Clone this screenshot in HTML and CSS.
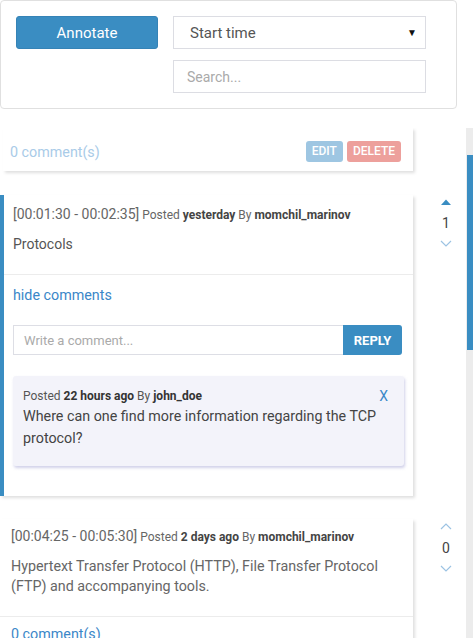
FILE: index.html
```html
<!DOCTYPE html>
<html>
<head>
<meta charset="utf-8">
<link rel="stylesheet" href="styles.css">
</head>
<body>
<div class="toolbar">
  <button class="btn-annotate">Annotate</button>
  <div class="filters">
    <div class="select"><span>Start time</span><span class="caret">&#9660;</span></div>
    <div class="input search">Search...</div>
  </div>
</div>

<div class="list-wrap">
  <div class="list">
    <div class="card card-partial">
      <span class="count faded">0 comment(s)</span>
      <div class="actions">
        <span class="btn-sm edit">EDIT</span>
        <span class="btn-sm del">DELETE</span>
      </div>
    </div>

    <div class="row">
      <div class="card active">
        <div class="card-body">
          <div class="meta"><span class="time">[00:01:30 - 00:02:35]</span> Posted <b>yesterday</b> By <b>momchil_marinov</b></div>
          <div class="text">Protocols</div>
        </div>
        <div class="card-foot">
          <div class="link">hide comments</div>
          <div class="reply-row">
            <div class="input comment-input">Write a comment...</div>
            <span class="btn-reply">REPLY</span>
          </div>
          <div class="comment">
            <div class="comment-meta"><span>Posted <b>22 hours ago</b> By <b>john_doe</b></span><span class="close">X</span></div>
            <div class="comment-text">Where can one find more information regarding the TCP protocol?</div>
          </div>
        </div>
      </div>
      <div class="vote">
        <svg class="up-filled" width="10" height="6" viewBox="0 0 10 6"><path d="M0 6 L5 0.5 L10 6 Z" fill="#3a8dc2"/></svg>
        <span class="num">1</span>
        <svg width="12" height="7" viewBox="0 0 12 7"><path d="M1 1 L6 6 L11 1" fill="none" stroke="#9cc3e3" stroke-width="1.2"/></svg>
      </div>
    </div>

    <div class="row">
      <div class="card plain">
        <div class="card-body">
          <div class="meta"><span class="time">[00:04:25 - 00:05:30]</span> Posted <b>2 days ago</b> By <b>momchil_marinov</b></div>
          <div class="text">Hypertext Transfer Protocol (HTTP), File Transfer Protocol (FTP) and accompanying tools.</div>
        </div>
        <div class="card-foot small">
          <div class="link">0 comment(s)</div>
        </div>
      </div>
      <div class="vote v2">
        <svg width="12" height="7" viewBox="0 0 12 7"><path d="M1 6 L6 1 L11 6" fill="none" stroke="#9cc3e3" stroke-width="1.2"/></svg>
        <span class="num">0</span>
        <svg width="12" height="7" viewBox="0 0 12 7"><path d="M1 1 L6 6 L11 1" fill="none" stroke="#9cc3e3" stroke-width="1.2"/></svg>
      </div>
    </div>
  </div>
  <div class="scrollbar"><div class="thumb"></div></div>
</div>
</body>
</html>
```

FILE: styles.css
```css
html, body {
  margin: 0;
  padding: 0;
  background: #fff;
  font-family: Roboto, "Liberation Sans", sans-serif;
  color: #555;
  overflow: hidden;
  height: 638px;
}

.toolbar {
  box-sizing: border-box;
  width: 457px;
  height: 109px;
  border: 1px solid #e0e0e0;
  border-radius: 4px;
  padding: 15px 30px 15px 15px;
  display: flex;
  gap: 15px;
  align-items: flex-start;
}

.btn-annotate {
  width: 142px;
  height: 33px;
  background: #3a8dc2;
  border: 1px solid #3583b6;
  border-radius: 3px;
  color: #fff;
  font-family: Roboto, "Liberation Sans", sans-serif;
  font-size: 15px;
  padding: 0;
}

.filters {
  display: flex;
  flex-direction: column;
  gap: 11px;
}

.select, .input {
  box-sizing: border-box;
  width: 253px;
  height: 33px;
  border: 1px solid #dcdde3;
  display: flex;
  align-items: center;
  padding: 0 8px 0 16px;
  font-size: 15px;
}

.select {
  justify-content: space-between;
  color: #555;
}

.caret {
  font-size: 10px;
  color: #111;
}

.search {
  color: #aaa;
  font-size: 14px;
  padding-left: 13px;
}

.list-wrap {
  margin-top: 19px;
  display: flex;
  height: 510px;
  overflow: hidden;
}

.list {
  flex: 1;
  display: flex;
  flex-direction: column;
}

.list > * {
  flex-shrink: 0;
}

.scrollbar {
  width: 7px;
  background: #ececec;
  display: flex;
  flex-direction: column;
  padding-top: 27px;
}

.thumb {
  margin-left: 1px;
  width: 6px;
  height: 195px;
  background: #3a8dc2;
}

.card {
  background: #fff;
  box-shadow: 2px 2px 3px rgba(0, 0, 0, 0.13);
}

.card-partial {
  margin-left: 3px;
  width: 410px;
  height: 43px;
  box-sizing: border-box;
  padding: 4px 12px 0 7px;
  display: flex;
  align-items: center;
  justify-content: space-between;
  margin-bottom: 24px;
}

.count.faded {
  font-size: 14.3px;
  color: #a9cbe8;
}

.actions {
  display: flex;
  gap: 4px;
}

.btn-sm {
  font-size: 12px;
  font-weight: 500;
  color: #fff;
  height: 21px;
  line-height: 21px;
  padding: 0 6px;
  border-radius: 3px;
}

.edit { background: #9ec6e2; }
.del { background: #eda09c; }

.row {
  display: flex;
  margin-bottom: 23px;
}

.card.active, .card.plain {
  width: 413px;
  box-sizing: border-box;
}

.card.active {
  border-left: 4px solid #3a8dc2;
}

.card-body {
  padding: 9px 12px 20px 9px;
  border-bottom: 1px solid #ececec;
}

.plain .card-body {
  padding: 7px 12px 20px 11px;
}

.meta {
  font-size: 12px;
  line-height: 20px;
  color: #666;
  white-space: nowrap;
}

.meta .time {
  font-size: 14px;
}

.meta b {
  color: #444;
}

.text {
  margin-top: 9px;
  font-size: 14px;
  line-height: 20px;
  color: #555;
}

.plain .text {
  font-size: 14.3px;
  color: #666;
}

.card-foot {
  padding: 10px 10px 30px 9px;
}

.card-foot.small {
  padding: 7px 11px 20px 11px;
}

.link {
  font-size: 14.3px;
  line-height: 20px;
  color: #3a87c8;
}

.reply-row {
  margin-top: 20px;
  display: flex;
  width: 389px;
}

.comment-input {
  flex: 1;
  width: auto;
  height: 30px;
  font-size: 13px;
  color: #aaa;
  padding-left: 10px;
  border-color: #dddee5;
  border-right: none;
}

.btn-reply {
  width: 59px;
  height: 30px;
  background: #3a8dc2;
  color: #fff;
  font-size: 13px;
  font-weight: bold;
  display: flex;
  align-items: center;
  justify-content: center;
  border-radius: 0 3px 3px 0;
}

.comment {
  margin-top: 21px;
  width: 391px;
  box-sizing: border-box;
  background: #f3f3fa;
  border-radius: 3px;
  padding: 10px 16px 17px 10px;
  box-shadow: 1px 2px 3px rgba(170, 170, 215, 0.55);
}

.comment-meta {
  display: flex;
  justify-content: space-between;
  font-size: 12px;
  line-height: 20px;
  color: #555;
}

.comment-meta b {
  color: #333;
}

.close {
  font-size: 14px;
  color: #3a87c8;
}

.comment-text {
  font-size: 14.3px;
  line-height: 22px;
  color: #444;
  margin-top: -1px;
}

.vote {
  width: 53px;
  display: flex;
  flex-direction: column;
  align-items: center;
  padding-top: 4px;
  padding-left: 13px;
  box-sizing: border-box;
}

.vote .num {
  font-size: 14px;
  line-height: 20px;
  margin: 8px 0 7px;
  color: #444;
}

.vote.v2 {
  padding-top: 4px;
}
```
